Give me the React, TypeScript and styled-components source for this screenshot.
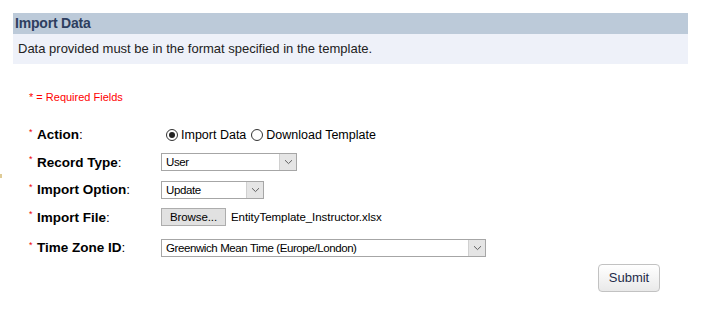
import React from 'react';
import styled, { createGlobalStyle } from 'styled-components';

const GlobalStyle = createGlobalStyle`
  html, body {
    margin: 0;
    padding: 0;
    background: #fff;
    font-family: 'Liberation Sans', Arial, sans-serif;
  }
`;

const Page = styled.div`
  position: relative;
  padding: 13px 17px 0 13px;
  width: 675px;
`;

const Marker = styled.div`
  position: absolute;
  left: 0;
  top: 174px;
  width: 2px;
  height: 4px;
  background: #c9a850;
  opacity: 0.6;
`;

const Header = styled.div`
  height: 21px;
  line-height: 21px;
  background-color: #bccad9;
  color: #2d3e5f;
  font-weight: bold;
  font-size: 14px;
  letter-spacing: -0.2px;
  padding-left: 2px;
`;

const Description = styled.div`
  height: 30px;
  line-height: 29px;
  background-color: #eef1f9;
  color: #222;
  font-size: 13px;
  padding-left: 5px;
`;

const Required = styled.div`
  color: #f00;
  font-size: 11px;
  line-height: 14px;
  margin: 26px 0 17px 16px;
`;

const Form = styled.div`
  display: flex;
  flex-direction: column;
  padding-left: 16px;
`;

const Row = styled.div<{ $top?: number }>`
  display: grid;
  grid-template-columns: 132px 1fr;
  align-items: center;
  height: 27.5px;
  margin-top: ${(p) => p.$top || 0}px;
`;

const Label = styled.div`
  display: flex;
  align-items: center;
  font-size: 13.5px;
  color: #000;
`;

const Star = styled.span`
  color: #e00;
  font-size: 9px;
  width: 8px;
  position: relative;
  top: -3px;
`;

const Bold = styled.b`
  font-weight: bold;
`;

const Control = styled.div`
  display: flex;
  align-items: center;
  font-size: 13px;
  color: #000;
`;

const RadioDot = styled.span<{ $on?: boolean }>`
  box-sizing: border-box;
  width: 12px;
  height: 12px;
  border-radius: 50%;
  border: 1px solid #333;
  margin: 0 3px 0 5px;
  display: inline-flex;
  align-items: center;
  justify-content: center;
  &::after {
    content: '';
    width: 6px;
    height: 6px;
    border-radius: 50%;
    background: ${(p) => (p.$on ? '#222' : 'transparent')};
  }
`;

const RadioText = styled.span`
  font-family: 'Liberation Sans', Arial, sans-serif;
  font-size: 12.5px;
`;

const Select = styled.div<{ $w: number }>`
  box-sizing: border-box;
  width: ${(p) => p.$w}px;
  height: 18px;
  border: 1px solid #a6a6a6;
  background: #fff;
  display: flex;
  align-items: center;
  justify-content: space-between;
  color: #000;
  padding-left: 4px;
`;

const SelectText = styled.span`
  font-family: 'Liberation Sans', Arial, sans-serif;
  font-size: 11.5px;
  letter-spacing: -0.4px;
`;

const Arrow = styled.span`
  box-sizing: border-box;
  width: 17px;
  height: 16px;
  background: #e5e5e5;
  border-left: 1px solid #d0d0d0;
  display: flex;
  align-items: center;
  justify-content: center;
`;

const BrowseButton = styled.div`
  box-sizing: border-box;
  width: 65px;
  height: 18px;
  border: 1px solid #adadad;
  background: #e1e1e1;
  font-size: 11.5px;
  letter-spacing: -0.1px;
  display: flex;
  align-items: center;
  justify-content: center;
`;

const FileName = styled.span`
  font-size: 11.5px;
  letter-spacing: -0.05px;
  margin-left: 5px;
`;

const Actions = styled.div`
  display: flex;
  justify-content: flex-end;
  padding-right: 28px;
  margin-top: 2px;
`;

const SubmitButton = styled.button`
  box-sizing: border-box;
  width: 62px;
  height: 28px;
  border: 1px solid #c2c2c2;
  border-radius: 4px;
  background: linear-gradient(#ffffff, #e9e9e9);
  color: #1e2b4a;
  font-family: 'Liberation Sans', Arial, sans-serif;
  font-size: 13px;
  padding: 0;
`;

const Chevron = () => (
  <svg width="9" height="6" viewBox="0 0 9 6">
    <path d="M1 1.2 L4.5 4.6 L8 1.2" fill="none" stroke="#606060" strokeWidth="1" />
  </svg>
);

const Field: React.FC<{ label: string; top?: number; children: React.ReactNode }> = ({ label, top, children }) => (
  <Row $top={top}>
    <Label>
      <Star>*</Star>
      <Bold>{label}</Bold>:
    </Label>
    <Control>{children}</Control>
  </Row>
);

export default function App() {
  return (
    <Page>
      <GlobalStyle />
      <Marker />
      <Header>Import Data</Header>
      <Description>Data provided must be in the format specified in the template.</Description>
      <Required>* = Required Fields</Required>
      <Form>
        <Field label="Action">
          <RadioDot $on />
          <RadioText>Import Data</RadioText>
          <RadioDot />
          <RadioText>Download Template</RadioText>
        </Field>
        <Field label="Record Type">
          <Select $w={136}>
            <SelectText>User</SelectText>
            <Arrow><Chevron /></Arrow>
          </Select>
        </Field>
        <Field label="Import Option">
          <Select $w={103}>
            <SelectText>Update</SelectText>
            <Arrow><Chevron /></Arrow>
          </Select>
        </Field>
        <Field label="Import File">
          <BrowseButton>Browse...</BrowseButton>
          <FileName>EntityTemplate_Instructor.xlsx</FileName>
        </Field>
        <Field label="Time Zone ID" top={3}>
          <Select $w={325}>
            <SelectText>Greenwich Mean Time (Europe/London)</SelectText>
            <Arrow><Chevron /></Arrow>
          </Select>
        </Field>
      </Form>
      <Actions>
        <SubmitButton>Submit</SubmitButton>
      </Actions>
    </Page>
  );
}
